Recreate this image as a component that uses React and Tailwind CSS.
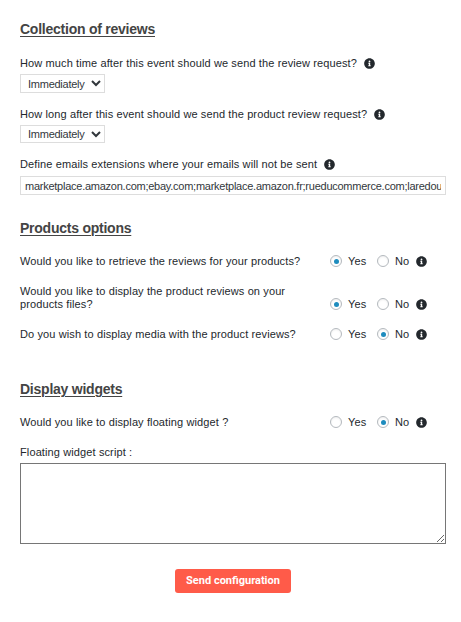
import { useState } from 'react';
import { FaInfoCircle } from 'react-icons/fa';

const PRODUCT_OPTIONS = [
  { name: 'retrieve', label: 'Would you like to retrieve the reviews for your products?', value: 'Yes' },
  { name: 'display', label: 'Would you like to display the product reviews on your products files?', value: 'Yes' },
  { name: 'media', label: 'Do you wish to display media with the product reviews?', value: 'No' },
];

const EXCLUDED = 'marketplace.amazon.com;ebay.com;marketplace.amazon.fr;rueducommerce.com;laredoute.fr';

function Title({ children }) {
  return (
    <h2 className="h-[18px] text-[14px] leading-[18px] font-bold tracking-[-0.24px] text-[#444] underline decoration-1 underline-offset-2">
      {children}
    </h2>
  );
}

function Info() {
  return <FaInfoCircle className="size-[11px] shrink-0 text-[#23282d]" />;
}

function Label({ children, info }) {
  return (
    <div className="flex h-3.5 items-center gap-[7px] whitespace-nowrap leading-[14px]">
      <span>{children}</span>
      {info && <Info />}
    </div>
  );
}

function DelaySelect({ className }) {
  return (
    <div className={`relative w-[85px] ${className}`}>
      <select className="block h-full w-full appearance-none border border-[#ddd] bg-white pl-[7px] text-[11px] leading-[14px] tracking-[-0.25px] text-[#32373c]">
        <option>Immediately</option>
      </select>
      <svg className="pointer-events-none absolute top-1.5 right-1 h-[7px] w-[10px]" viewBox="0 0 10 7" fill="none" stroke="#32373c" strokeWidth="2">
        <path d="M1 1l4 4 4-4" />
      </svg>
    </div>
  );
}

function Radio({ name, checked, onChange }) {
  return (
    <span className="relative flex size-3 self-start">
      <input
        type="radio"
        name={name}
        checked={checked}
        onChange={onChange}
        className="size-3 appearance-none rounded-full border border-[#b4b9be] bg-white shadow-[inset_0_1px_2px_rgba(0,0,0,0.07)]"
      />
      {checked && <span className="pointer-events-none absolute top-[3.5px] left-[3.5px] size-[5px] rounded-full bg-[#1e8cbe]" />}
    </span>
  );
}

function YesNoRow({ name, label, initial }) {
  const [value, setValue] = useState(initial);

  return (
    <div className="flex items-end">
      <span className="w-[310px] pr-6 leading-[13px]">{label}</span>
      <div className="flex h-[13px] items-center leading-[13px]">
        <Radio name={name} checked={value === 'Yes'} onChange={() => setValue('Yes')} />
        <span className="ml-1.5 w-[29px]">Yes</span>
        <Radio name={name} checked={value === 'No'} onChange={() => setValue('No')} />
        <span className="ml-1.5 w-[21px]">No</span>
        <Info />
      </div>
    </div>
  );
}

export default function App() {
  return (
    <form className="h-[622px] w-[461px] bg-white pt-5 pr-[15px] pl-5 font-['Liberation_Sans',Arial,sans-serif] text-[11px] tracking-[0.115px] text-[#23282d]">
      <Title>Collection of reviews</Title>
      <div className="mt-[18px]">
        <Label info>How much time after this event should we send the review request?</Label>
        <DelaySelect className="mt-1 h-[19px]" />
      </div>
      <div className="mt-3.5">
        <Label info>How long after this event should we send the product review request?</Label>
        <DelaySelect className="mt-1 h-[18px]" />
      </div>
      <div className="mt-3.5">
        <Label info>Define emails extensions where your emails will not be sent</Label>
        <input
          type="text"
          defaultValue={EXCLUDED}
          className="mt-[5px] block h-[19px] w-full border border-[#ddd] px-1 text-[11px] tracking-[-0.25px] text-[#32373c]"
        />
      </div>

      <div className="mt-6">
        <Title>Products options</Title>
        <div className="mt-[18px] space-y-[17px]">
          {PRODUCT_OPTIONS.map(o => (
            <YesNoRow key={o.name} name={o.name} label={o.label} initial={o.value} />
          ))}
        </div>
      </div>

      <div className="mt-[39px]">
        <Title>Display widgets</Title>
        <div className="mt-[18px]">
          <YesNoRow name="floating" label="Would you like to display floating widget ?" initial="No" />
        </div>
        <div className="mt-4">
          <Label>Floating widget script :</Label>
          <textarea className="mt-1 block h-[81px] w-full border border-[#767676] bg-white" />
        </div>
      </div>

      <div className="mt-[25px] flex justify-center">
        <button type="button" className="h-6 w-[116px] rounded-[3px] bg-[#ff5b49] font-[Roboto,sans-serif] text-[11px] font-bold tracking-normal text-white">
          Send configuration
        </button>
      </div>
    </form>
  );
}
